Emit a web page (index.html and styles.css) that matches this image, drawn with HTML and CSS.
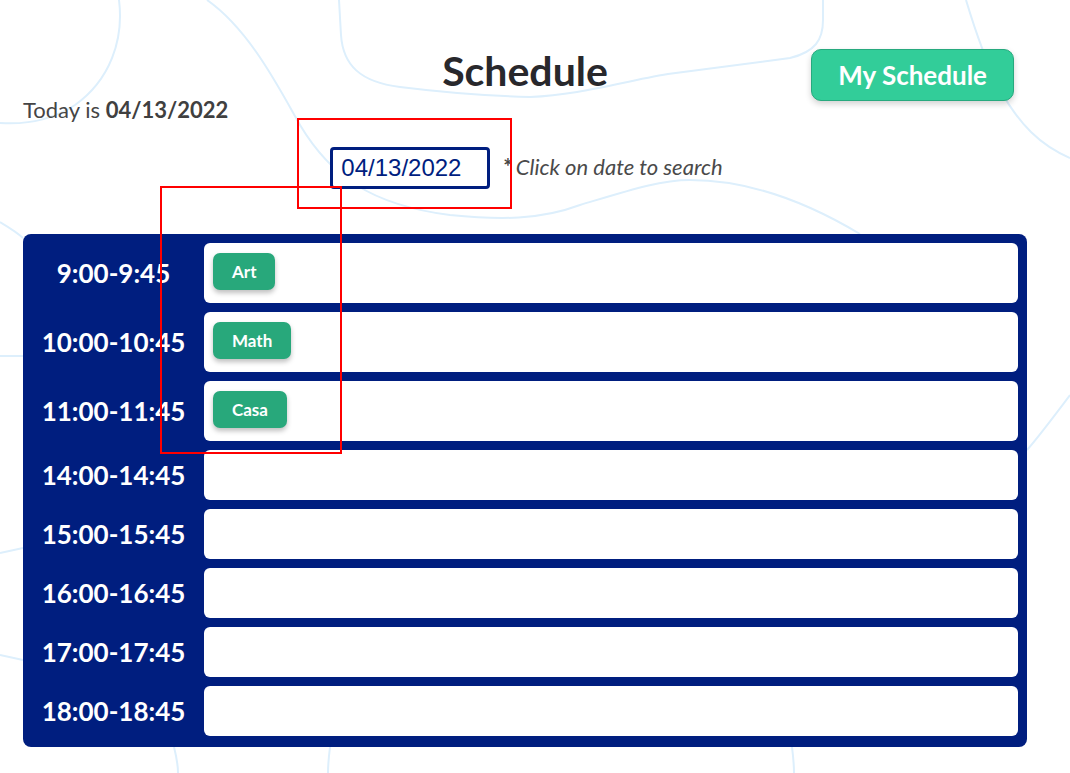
FILE: index.html
```html
<!DOCTYPE html>
<html lang="en">
<head>
<meta charset="utf-8">
<title>Schedule</title>
<link rel="stylesheet" href="styles.css">
</head>
<body>
<svg class="bg" width="1070" height="773" viewBox="0 0 1070 773" aria-hidden="true">
  <path d="M119,0 C124,40 110,80 75,105 C55,118 30,125 0,123"/>
  <path d="M207,0 C250,30 280,90 300,125 C330,175 370,205 450,215 C500,220 540,220 580,205 C630,190 660,180 690,180 C760,180 820,210 860,234"/>
  <path d="M339,0 L341,35 C343,65 360,82 400,87 C440,92 490,96 530,97 C580,95 620,82 668,74 L790,58 C815,52 823,40 823,20 L823,0"/>
  <path d="M966,0 C975,30 985,60 1000,90 C1020,125 1040,145 1070,158"/>
  <path d="M1070,395 C1055,415 1040,435 1027,450"/>
  <path d="M174,747 C176,755 178,765 178,773"/>
  <path d="M330,747 C329,755 328,765 328,773"/>
  <path d="M792,747 C793,755 794,765 794,773"/>
  <path d="M0,222 C10,228 18,233 23,238"/>
  <path d="M0,356 L23,356"/>
  <path d="M0,553 L23,548"/>
  <path d="M0,655 L23,660"/>
</svg>
<main class="page">
  <header class="head">
    <h1 class="title">Schedule</h1>
    <button class="my-btn" type="button">My Schedule</button>
    <p class="today">Today is <b>04/13/2022</b></p>
  </header>
  <div class="search">
    <input class="date" type="text" value="04/13/2022">
    <span class="hint"><b class="star">*</b><i>Click on date to search</i></span>
  </div>
  <section class="schedule">
    <div class="time">9:00-9:45</div>
    <div class="slot tall"><span class="chip">Art</span></div>
    <div class="time">10:00-10:45</div>
    <div class="slot tall"><span class="chip">Math</span></div>
    <div class="time">11:00-11:45</div>
    <div class="slot tall"><span class="chip">Casa</span></div>
    <div class="time">14:00-14:45</div>
    <div class="slot"></div>
    <div class="time">15:00-15:45</div>
    <div class="slot"></div>
    <div class="time">16:00-16:45</div>
    <div class="slot"></div>
    <div class="time">17:00-17:45</div>
    <div class="slot"></div>
    <div class="time">18:00-18:45</div>
    <div class="slot"></div>
  </section>
</main>
<div class="mark mark-a"></div>
<div class="mark mark-b"></div>
</body>
</html>
```
FILE: styles.css
```css
* { box-sizing: border-box; }
html, body { margin: 0; padding: 0; }
body {
  width: 1070px;
  height: 773px;
  overflow: hidden;
  position: relative;
  background: #ffffff;
  font-family: Lato, "Noto Sans", sans-serif;
  color: #444444;
}
.bg {
  position: absolute;
  left: 0;
  top: 0;
  z-index: 0;
  pointer-events: none;
}
.bg path {
  fill: none;
  stroke: #ddeffc;
  stroke-width: 2;
}
.page {
  position: relative;
  z-index: 1;
  width: 1004px;
  margin-left: 23px;
}
.head {
  display: grid;
  grid-template-columns: 1fr auto 1fr;
  grid-template-rows: 48px 28px;
  padding-top: 47px;
}
.title {
  grid-column: 2;
  grid-row: 1;
  margin: 0;
  font-size: 41px;
  line-height: 48px;
  font-weight: 700;
  color: #28282c;
}
.my-btn {
  grid-column: 3;
  grid-row: 1 / span 2;
  justify-self: end;
  align-self: start;
  margin: 2px 13px 0 0;
  height: 52px;
  padding: 0 26px;
  border: 1px solid #27a97e;
  border-radius: 10px;
  background: #32cd99;
  color: #ffffff;
  font-family: Lato, sans-serif;
  font-weight: 700;
  font-size: 26px;
  box-shadow: 0 3px 6px rgba(0, 0, 0, 0.18);
}
.today {
  grid-column: 1;
  grid-row: 2;
  align-self: end;
  margin: 0;
  font-size: 22px;
  line-height: 26px;
  color: #454545;
  white-space: nowrap;
}
.today b { font-weight: 700; color: #404040; }
.search {
  display: flex;
  justify-content: center;
  align-items: center;
  gap: 13px;
  margin-top: 24px;
  height: 42px;
  padding-left: 3px;
}
.date {
  width: 160px;
  height: 42px;
  border: 3px solid #001e7f;
  border-radius: 4px;
  padding: 0 8px;
  font-family: "Liberation Sans", Arial, sans-serif;
  font-size: 24px;
  color: #001e7f;
  background: #ffffff;
}
.hint {
  font-size: 22px;
  line-height: 26px;
  margin-top: -3px;
  color: #4a4a4a;
  white-space: nowrap;
}
.star { font-weight: 700; color: #444; margin-right: 3px; }
.schedule {
  margin-top: 45px;
  background: #001e7f;
  border-radius: 8px;
  padding: 9px 9px 11px 0;
  display: grid;
  grid-template-columns: 181px 1fr;
  row-gap: 9px;
}
.time {
  align-self: center;
  text-align: center;
  color: #ffffff;
  font-weight: 700;
  font-size: 26px;
  white-space: nowrap;
}
.slot {
  background: #ffffff;
  border-radius: 6px;
  height: 50px;
  padding: 10px 9px;
  display: flex;
  align-items: flex-start;
}
.slot.tall { height: 60px; }
.chip {
  display: inline-flex;
  align-items: center;
  height: 37px;
  padding: 0 19px;
  border-radius: 7px;
  background: #28a87b;
  color: #ffffff;
  font-weight: 700;
  font-size: 17px;
  box-shadow: 0 3px 5px rgba(0, 0, 0, 0.25);
}
.mark {
  position: absolute;
  z-index: 5;
  border: 2px solid #ff0000;
  pointer-events: none;
}
.mark-a { left: 297px; top: 118px; width: 215px; height: 91px; }
.mark-b { left: 160px; top: 186px; width: 182px; height: 268px; }
```
